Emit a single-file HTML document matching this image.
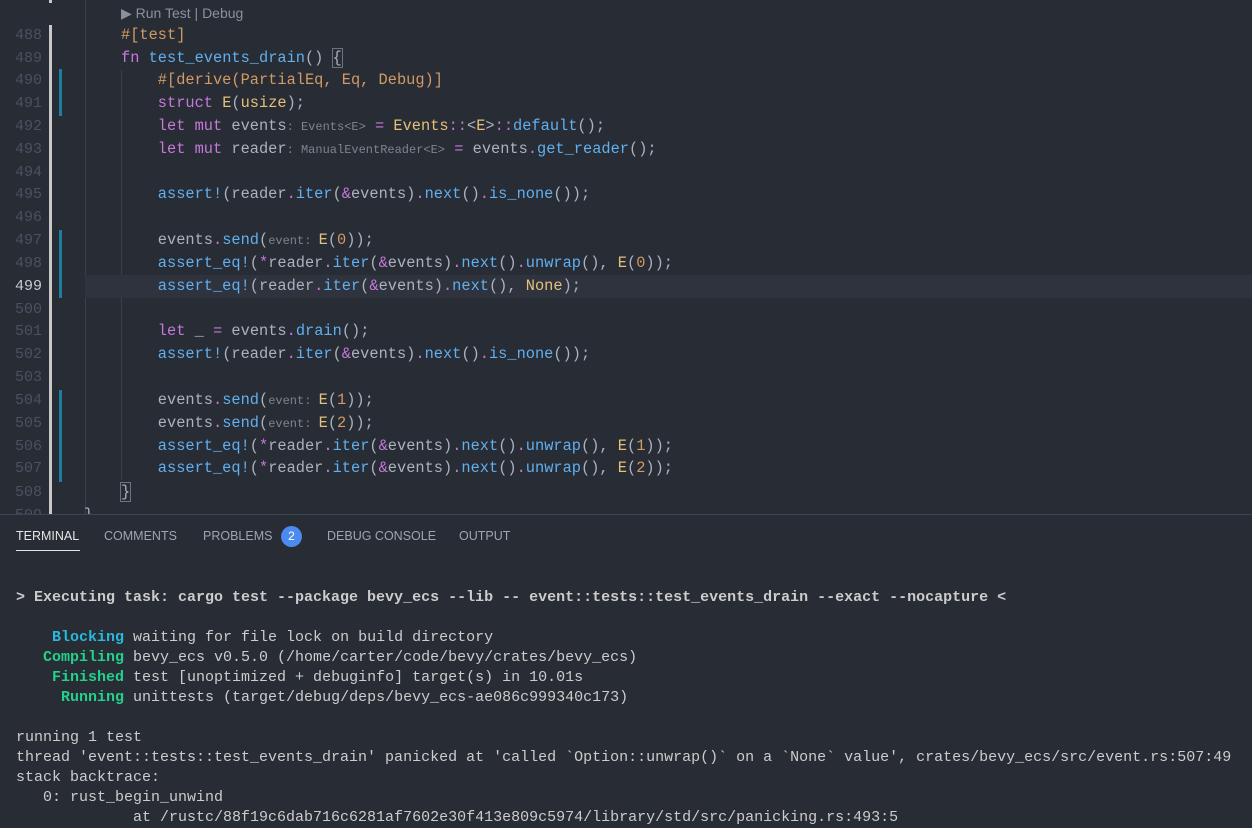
<!DOCTYPE html>
<html><head><meta charset="utf-8">
<style>
*{margin:0;padding:0;box-sizing:border-box}
body{width:1252px;height:824px;background:#282c34;overflow:hidden;position:relative;font-family:"Liberation Mono",monospace;color:#abb2bf}
.ln{position:absolute;left:0;width:42px;text-align:right;font-size:15px;color:#495162;height:23px;line-height:23px}
.cl{position:absolute;left:121px;font-size:15.33px;white-space:pre;height:23px;line-height:23px}
.k{color:#c678dd}.f{color:#61afef}.a{color:#d19a66}.t{color:#e5c07b}.n{color:#d19a66}
.h{color:#7f848e;font-size:12px}
.git{position:absolute;left:59px;width:3px;background:#1b80a0}
.term{position:absolute;left:16px;font-size:15px;white-space:pre;line-height:20px;color:#cccccc}
.tab{position:absolute;top:529px;font-family:"Liberation Sans",sans-serif;font-size:12.5px;color:#9da5b4}
.b{font-weight:bold}
</style></head><body>
<div style="position:absolute;left:49px;top:0;width:3px;height:3px;background:#c8c8c8"></div>
<div style="position:absolute;left:49px;top:25px;width:3px;height:489px;background:#c8c8c8"></div>
<div style="position:absolute;left:85px;top:0;width:1px;height:514px;background:#3b4048"></div>
<div style="position:absolute;left:121px;top:70px;width:1px;height:410px;background:#3b4048"></div>
<div style="position:absolute;left:85px;top:275px;width:1167px;height:23px;background:#2f333d"></div>
<div style="position:absolute;left:121px;top:5px;font-family:'Liberation Sans',sans-serif;font-size:14px;color:#8b919c">▶ Run Test | Debug</div>
<div class="git" style="top:69px;height:47px"></div>
<div class="git" style="top:230px;height:68px"></div>
<div class="git" style="top:390px;height:92px"></div>

<div class="ln" style="top:24px">488</div>
<div class="ln" style="top:47px">489</div>
<div class="ln" style="top:69px">490</div>
<div class="ln" style="top:92px">491</div>
<div class="ln" style="top:115px">492</div>
<div class="ln" style="top:138px">493</div>
<div class="ln" style="top:161px">494</div>
<div class="ln" style="top:183px">495</div>
<div class="ln" style="top:206px">496</div>
<div class="ln" style="top:229px">497</div>
<div class="ln" style="top:252px">498</div>
<div class="ln" style="top:275px;color:#c8ccd4">499</div>
<div class="ln" style="top:298px">500</div>
<div class="ln" style="top:320px">501</div>
<div class="ln" style="top:343px">502</div>
<div class="ln" style="top:366px">503</div>
<div class="ln" style="top:389px">504</div>
<div class="ln" style="top:412px">505</div>
<div class="ln" style="top:435px">506</div>
<div class="ln" style="top:457px">507</div>
<div class="ln" style="top:481px">508</div>
<div class="ln" style="top:504px">509</div>

<div class="cl a" style="top:24px">#[test]</div>
<div class="cl" style="top:47px"><span class="k">fn</span> <span class="f">test_events_drain</span>() <span style="outline:1px solid #6b7280">{</span></div>
<div class="cl a" style="top:69px">    #[derive(PartialEq, Eq, Debug)]</div>
<div class="cl" style="top:92px">    <span class="k">struct</span> <span class="t">E</span>(<span class="t">usize</span>);</div>
<div class="cl" style="top:115px">    <span class="k">let mut</span> events<span class="h">: Events&lt;E&gt;</span> <span class="k">=</span> <span class="t">Events</span><span class="k">::</span>&lt;<span class="t">E</span>&gt;<span class="k">::</span><span class="f">default</span>();</div>
<div class="cl" style="top:138px">    <span class="k">let mut</span> reader<span class="h">: ManualEventReader&lt;E&gt;</span> <span class="k">=</span> events<span class="k">.</span><span class="f">get_reader</span>();</div>
<div class="cl" style="top:183px">    <span class="f">assert!</span>(reader<span class="k">.</span><span class="f">iter</span>(<span class="k">&amp;</span>events)<span class="k">.</span><span class="f">next</span>()<span class="k">.</span><span class="f">is_none</span>());</div>
<div class="cl" style="top:229px">    events<span class="k">.</span><span class="f">send</span>(<span class="h">event: </span><span class="t">E</span>(<span class="n">0</span>));</div>
<div class="cl" style="top:252px">    <span class="f">assert_eq!</span>(<span class="k">*</span>reader<span class="k">.</span><span class="f">iter</span>(<span class="k">&amp;</span>events)<span class="k">.</span><span class="f">next</span>()<span class="k">.</span><span class="f">unwrap</span>(), <span class="t">E</span>(<span class="n">0</span>));</div>
<div class="cl" style="top:275px">    <span class="f">assert_eq!</span>(reader<span class="k">.</span><span class="f">iter</span>(<span class="k">&amp;</span>events)<span class="k">.</span><span class="f">next</span>(), <span class="t">None</span>);</div>
<div class="cl" style="top:320px">    <span class="k">let</span> _ <span class="k">=</span> events<span class="k">.</span><span class="f">drain</span>();</div>
<div class="cl" style="top:343px">    <span class="f">assert!</span>(reader<span class="k">.</span><span class="f">iter</span>(<span class="k">&amp;</span>events)<span class="k">.</span><span class="f">next</span>()<span class="k">.</span><span class="f">is_none</span>());</div>
<div class="cl" style="top:389px">    events<span class="k">.</span><span class="f">send</span>(<span class="h">event: </span><span class="t">E</span>(<span class="n">1</span>));</div>
<div class="cl" style="top:412px">    events<span class="k">.</span><span class="f">send</span>(<span class="h">event: </span><span class="t">E</span>(<span class="n">2</span>));</div>
<div class="cl" style="top:435px">    <span class="f">assert_eq!</span>(<span class="k">*</span>reader<span class="k">.</span><span class="f">iter</span>(<span class="k">&amp;</span>events)<span class="k">.</span><span class="f">next</span>()<span class="k">.</span><span class="f">unwrap</span>(), <span class="t">E</span>(<span class="n">1</span>));</div>
<div class="cl" style="top:457px">    <span class="f">assert_eq!</span>(<span class="k">*</span>reader<span class="k">.</span><span class="f">iter</span>(<span class="k">&amp;</span>events)<span class="k">.</span><span class="f">next</span>()<span class="k">.</span><span class="f">unwrap</span>(), <span class="t">E</span>(<span class="n">2</span>));</div>
<div class="cl" style="top:481px"><span style="outline:1px solid #6b7280">}</span></div>
<div class="cl" style="top:504px;left:84px">}</div>

<div style="position:absolute;left:0;top:514px;width:1252px;height:310px;background:#282c34;border-top:1px solid #3e4452"></div>
<div class="tab" style="left:16px;color:#e6e6e6">TERMINAL</div>
<div style="position:absolute;left:16px;top:550px;width:64px;height:1px;background:#e6e6e6"></div>
<div class="tab" style="left:104px">COMMENTS</div>
<div class="tab" style="left:203px">PROBLEMS</div>
<div style="position:absolute;left:281px;top:526px;width:21px;height:21px;border-radius:50%;background:#4d8af0;color:#fff;font-family:'Liberation Sans',sans-serif;font-size:12px;text-align:center;line-height:21px">2</div>
<div class="tab" style="left:327px">DEBUG CONSOLE</div>
<div class="tab" style="left:459px">OUTPUT</div>

<div class="term b" style="top:588px">&gt; Executing task: cargo test --package bevy_ecs --lib -- event::tests::test_events_drain --exact --nocapture &lt;</div>
<div class="term" style="top:628px">    <span class="b" style="color:#29b8db">Blocking</span> waiting for file lock on build directory</div>
<div class="term" style="top:648px">   <span class="b" style="color:#23d18b">Compiling</span> bevy_ecs v0.5.0 (/home/carter/code/bevy/crates/bevy_ecs)</div>
<div class="term" style="top:668px">    <span class="b" style="color:#23d18b">Finished</span> test [unoptimized + debuginfo] target(s) in 10.01s</div>
<div class="term" style="top:688px">     <span class="b" style="color:#23d18b">Running</span> unittests (target/debug/deps/bevy_ecs-ae086c999340c173)</div>
<div class="term" style="top:728px">running 1 test</div>
<div class="term" style="top:748px">thread 'event::tests::test_events_drain' panicked at 'called `Option::unwrap()` on a `None` value', crates/bevy_ecs/src/event.rs:507:49</div>
<div class="term" style="top:768px">stack backtrace:</div>
<div class="term" style="top:788px">   0: rust_begin_unwind</div>
<div class="term" style="top:808px">             at /rustc/88f19c6dab716c6281af7602e30f413e809c5974/library/std/src/panicking.rs:493:5</div>
</body></html>
